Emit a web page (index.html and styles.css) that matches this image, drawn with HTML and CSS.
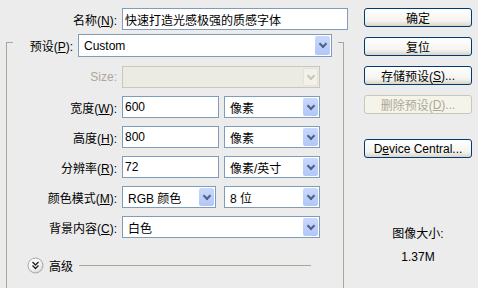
FILE: index.html
```html
<!DOCTYPE html>
<html>
<head>
    <title>新建</title>
    <link rel="stylesheet" href="styles.css">
</head>
<body>
    <div class="dialog">
        <div class="main">
            <div class="name-row">
                <span class="name-label">名称(<u>N</u>):</span>
                <div class="field name-field">快速打造光感极强的质感字体</div>
            </div>

            <div class="group">
                <div class="preset-row">
                    <span class="preset-label">预设(<u>P</u>):</span>
                    <div class="select preset-select">Custom<span class="arrow"></span></div>
                </div>

                <div class="rows">
                    <div class="row">
                        <span class="label disabled-text">Size:</span>
                        <div class="select select-wide disabled"><span class="arrow"></span></div>
                    </div>
                    <div class="row">
                        <span class="label">宽度(<u>W</u>):</span>
                        <div class="field num-field">600</div>
                        <div class="select unit-select">像素<span class="arrow"></span></div>
                    </div>
                    <div class="row">
                        <span class="label">高度(<u>H</u>):</span>
                        <div class="field num-field">800</div>
                        <div class="select unit-select">像素<span class="arrow"></span></div>
                    </div>
                    <div class="row">
                        <span class="label">分辨率(<u>R</u>):</span>
                        <div class="field num-field">72</div>
                        <div class="select unit-select">像素/英寸<span class="arrow"></span></div>
                    </div>
                    <div class="row">
                        <span class="label">颜色模式(<u>M</u>):</span>
                        <div class="select mode-select">RGB 颜色<span class="arrow"></span></div>
                        <div class="select bits-select">8 位<span class="arrow"></span></div>
                    </div>
                    <div class="row">
                        <span class="label">背景内容(<u>C</u>):</span>
                        <div class="select select-wide">白色<span class="arrow"></span></div>
                    </div>
                </div>

                <div class="advanced">
                    <svg class="adv-icon" width="17" height="17" viewBox="0 0 17 17">
                        <defs>
                            <radialGradient id="advBg" cx="0.4" cy="0.35" r="0.7">
                                <stop offset="0" stop-color="#ffffff"/>
                                <stop offset="0.6" stop-color="#f4f4f2"/>
                                <stop offset="1" stop-color="#cfcfcf"/>
                            </radialGradient>
                        </defs>
                        <circle cx="8.5" cy="8.5" r="7.5" fill="url(#advBg)" stroke="#a7a7a7"/>
                        <path d="M5.5 5 L8.5 8 L11.5 5 M5.5 8.5 L8.5 11.5 L11.5 8.5" stroke="#222" stroke-width="1.4" fill="none"/>
                    </svg>
                    <span class="adv-text">高级</span>
                    <span class="adv-line"></span>
                </div>
            </div>
        </div>

        <div class="side">
            <div class="button">确定</div>
            <div class="button">复位</div>
            <div class="button">存储预设(<u>S</u>)...</div>
            <div class="button disabled-btn">删除预设(<u>D</u>)...</div>
            <div class="button device-btn">D<u>e</u>vice Central...</div>
            <div class="info">
                <p>图像大小:</p>
                <p>1.37M</p>
            </div>
        </div>
    </div>
</body>
</html>
```

FILE: styles.css
```css
body {
    margin: 0;
    width: 478px;
    height: 288px;
    overflow: hidden;
    background-color: #ececec;
    color: #000;
    font-family: "Liberation Sans", "Noto Sans CJK SC", sans-serif;
    font-size: 12px;
}

u {
    text-decoration: underline;
    text-underline-offset: 1px;
}

.dialog {
    display: flex;
    padding-top: 8px;
}

.main {
    width: 352px;
}

.name-row {
    display: flex;
    align-items: center;
}

.name-label {
    width: 117px;
    text-align: right;
}

.field {
    box-sizing: border-box;
    height: 22px;
    display: flex;
    align-items: center;
    padding-left: 2px;
    background-color: #fff;
    border: 1px solid #7f9db9;
    white-space: nowrap;
}

.name-field {
    margin-left: 5px;
    width: 226px;
}

.group {
    box-sizing: border-box;
    margin: 12px 0 0 6px;
    width: 338px;
    height: 260px;
    border: 1px solid #aca899;
    border-bottom: none;
}

.preset-row {
    display: flex;
    align-items: center;
    width: 325px;
    margin: -9px 0 0 6px;
    background-color: #ececec;
}

.preset-label {
    width: 60px;
    text-align: right;
}

.select {
    box-sizing: border-box;
    height: 22px;
    display: flex;
    align-items: center;
    padding-left: 5px;
    background-color: #fff;
    border: 1px solid #7f9db9;
    white-space: nowrap;
    position: relative;
}

.preset-select {
    height: 23px;
    margin-left: 5px;
    width: 254px;
}

.arrow {
    position: absolute;
    top: 1px;
    bottom: 1px;
    right: 1px;
    width: 15px;
    border-radius: 2px;
    background: linear-gradient(#c9d8fc, #b2c7f8);
    display: flex;
    justify-content: center;
    align-items: center;
}

.arrow::before {
    content: "";
    width: 4px;
    height: 4px;
    margin-top: -3px;
    border-right: 2px solid #4d6185;
    border-bottom: 2px solid #4d6185;
    transform: rotate(45deg);
}

.rows {
    display: flex;
    flex-direction: column;
    gap: 8px;
    margin-top: 9px;
}

.row {
    display: flex;
    align-items: center;
}

.label {
    width: 110px;
    text-align: right;
    margin-right: 5px;
}

.disabled-text {
    color: #aca899;
}

.select-wide {
    width: 198px;
}

.select.disabled {
    background-color: #ebebe4;
    border-color: #c9c7ba;
}

.select.disabled .arrow {
    background: #f2f1ea;
    border: 1px solid #e4e2d8;
    box-sizing: border-box;
}

.select.disabled .arrow::before {
    border-color: #c9c7ba;
}

.num-field {
    width: 97px;
}

.unit-select {
    margin-left: 5px;
    width: 96px;
}

.mode-select {
    width: 94px;
}

.bits-select {
    margin-left: 8px;
    width: 96px;
}

.advanced {
    display: flex;
    align-items: center;
    margin: 19px 32px 0 20px;
}

.adv-text {
    margin-left: 5px;
}

.adv-line {
    flex: 1;
    height: 1px;
    margin-left: 6px;
    background-color: #aca899;
}

.side {
    margin-left: 12px;
    width: 108px;
    display: flex;
    flex-direction: column;
}

.button {
    box-sizing: border-box;
    height: 19px;
    margin-bottom: 10px;
    display: flex;
    justify-content: center;
    align-items: center;
    border: 1px solid #003c74;
    border-radius: 3px;
    background: linear-gradient(#ffffff, #f4f3ee 70%, #d8d4c8);
    white-space: nowrap;
}

.disabled-btn {
    border-color: #c9c7ba;
    color: #aca899;
    background: #f5f4ea;
}

.device-btn {
    margin-top: 15px;
}

.info {
    margin-top: 58px;
    text-align: center;
}

.info p {
    margin: 0 0 7px;
    line-height: 16px;
}
```
